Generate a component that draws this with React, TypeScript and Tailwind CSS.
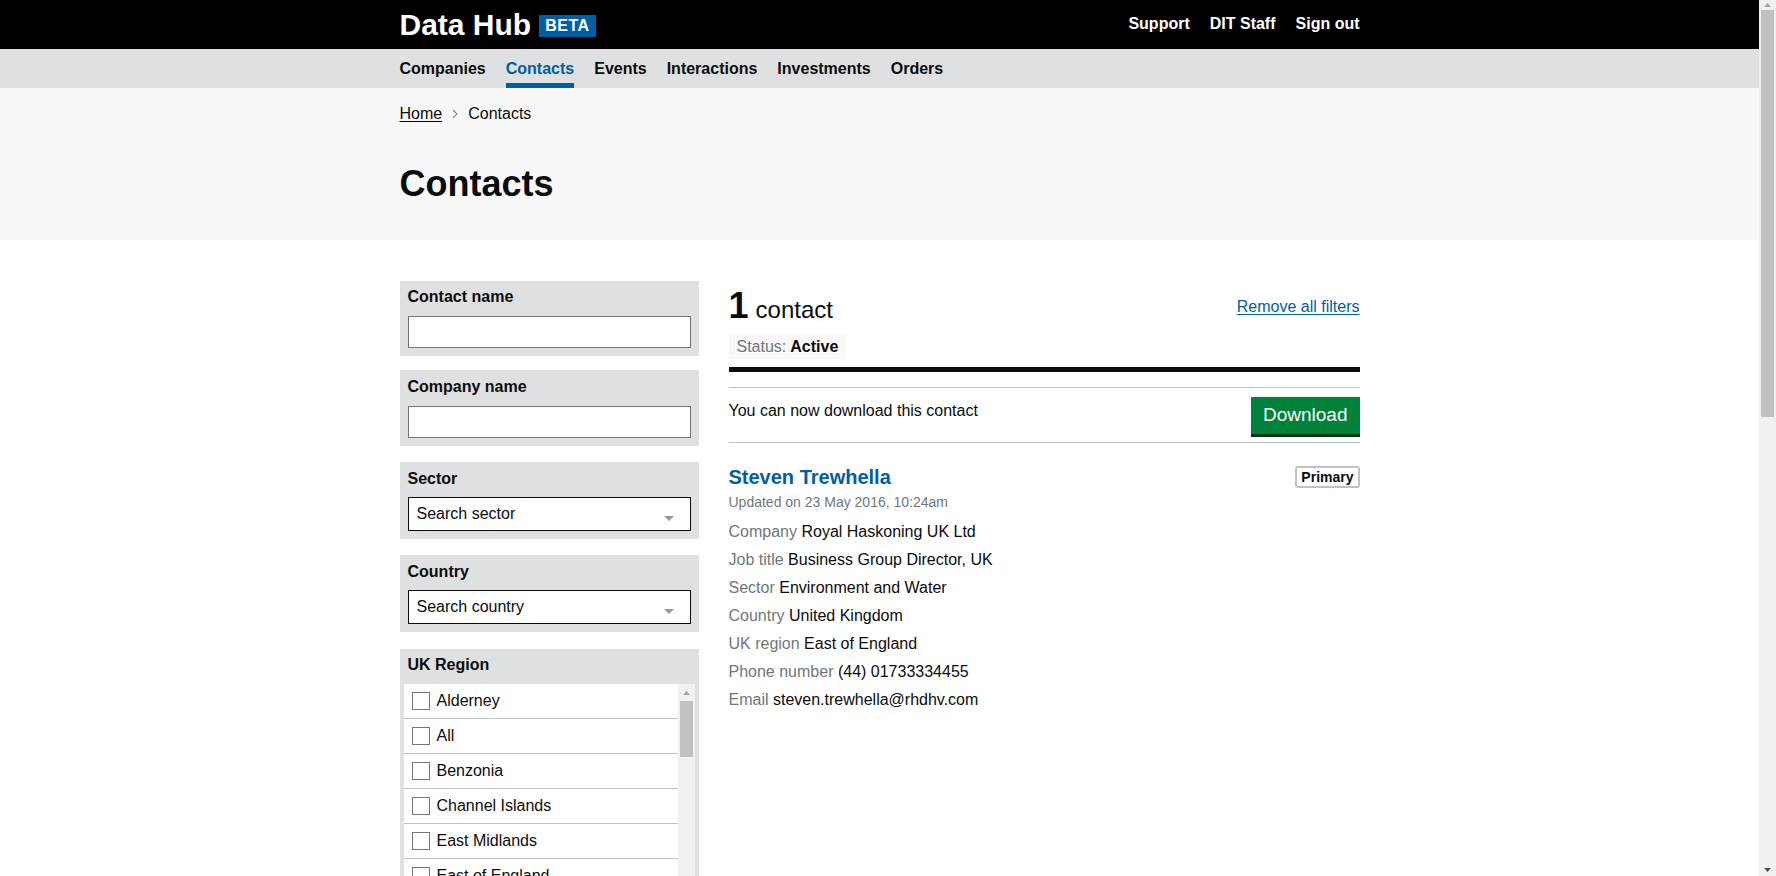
import React from 'react';

const navItems = ['Companies', 'Contacts', 'Events', 'Interactions', 'Investments', 'Orders'];

const regions = [
  'Alderney',
  'All',
  'Benzonia',
  'Channel Islands',
  'East Midlands',
  'East of England',
  'Guernsey',
  'Isle of Man',
];

const details: [string, string][] = [
  ['Company', 'Royal Haskoning UK Ltd'],
  ['Job title', 'Business Group Director, UK'],
  ['Sector', 'Environment and Water'],
  ['Country', 'United Kingdom'],
  ['UK region', 'East of England'],
  ['Phone number', '(44) 01733334455'],
  ['Email', 'steven.trewhella@rhdhv.com'],
];

const Triangle: React.FC<{ up?: boolean; color: string; w?: number; h?: number }> = ({
  up,
  color,
  w = 8,
  h = 4,
}) => (
  <svg width={w} height={h} viewBox={`0 0 ${w} ${h}`}>
    <polygon points={up ? `0,${h} ${w / 2},0 ${w},${h}` : `0,0 ${w},0 ${w / 2},${h}`} fill={color} />
  </svg>
);

const TextFilter: React.FC<{ label: string; className?: string }> = ({ label, className = '' }) => (
  <div className={`bg-[#dee0e2] px-[8px] pt-[6px] pb-[8px] ${className}`}>
    <div className="text-[16px] leading-[20px] font-bold text-[#0b0c0c] mb-[9px]">{label}</div>
    <div className="h-[32px] bg-white border border-[#6f777b]" />
  </div>
);

const SelectFilter: React.FC<{ label: string; placeholder: string; className?: string }> = ({
  label,
  placeholder,
  className = '',
}) => (
  <div className={`bg-[#dee0e2] px-[8px] pt-[7px] pb-[8px] ${className}`}>
    <div className="text-[16px] leading-[20px] font-bold text-[#0b0c0c] mb-[8px]">{label}</div>
    <div className="h-[34px] bg-white border border-[#0b0c0c] flex items-center justify-between pl-[8px] pr-[16px]">
      <span className="text-[16px] text-[#0b0c0c]">{placeholder}</span>
      <span className="mt-[8px] flex">
        <Triangle color="#999999" w={10} h={5} />
      </span>
    </div>
  </div>
);

export default function App() {
  return (
    <div className="flex w-full h-[876px] overflow-hidden bg-white font-['Liberation_Sans',Arial,sans-serif] text-[#0b0c0c]">
      <div className="flex-1 min-w-0 flex flex-col">
        {/* header */}
        <header className="bg-black h-[49px] shrink-0">
          <div className="w-[960px] mx-auto h-full flex items-center justify-between">
            <div className="flex items-center">
              <span className="text-white text-[30px] leading-[34px] font-bold">Data Hub</span>
              <span className="ml-[8px] mt-[3px] bg-[#005ea5] text-white text-[16px] leading-[22px] h-[22px] font-bold px-[6px] tracking-[0.5px]">
                BETA
              </span>
            </div>
            <nav className="flex gap-[20px] text-white text-[16px] font-bold -mt-[2px]">
              <span>Support</span>
              <span>DIT Staff</span>
              <span>Sign out</span>
            </nav>
          </div>
        </header>

        {/* main nav */}
        <div className="bg-[#dee0e2] h-[39px] shrink-0">
          <div className="w-[960px] mx-auto h-full flex gap-[20px]">
            {navItems.map((item) => (
              <span
                key={item}
                className={
                  item === 'Contacts'
                    ? 'h-full flex items-center border-y-[5px] border-t-transparent border-b-[#005ea5] text-[#005ea5] text-[16px] font-bold'
                    : 'h-full flex items-center border-y-[5px] border-transparent text-[#0b0c0c] text-[16px] font-bold'
                }
              >
                {item}
              </span>
            ))}
          </div>
        </div>

        {/* page heading */}
        <div className="bg-[#f8f8f8] h-[152px] shrink-0">
          <div className="w-[960px] mx-auto pt-[16px]">
            <div className="flex items-center text-[16px] leading-[20px]">
              <span className="underline underline-offset-[2px]">Home</span>
              <span className="mx-[10px] flex">
                <svg width="6" height="10" viewBox="0 0 6 10">
                  <path d="M1 1 L5 5 L1 9" fill="none" stroke="#8b8f92" strokeWidth="1.2" />
                </svg>
              </span>
              <span>Contacts</span>
            </div>
            <h1 className="mt-[40px] text-[36px] leading-[40px] font-bold">Contacts</h1>
          </div>
        </div>

        {/* content */}
        <div className="w-[960px] mx-auto flex pt-[41px]">
          <aside className="w-[299px] shrink-0 flex flex-col">
            <TextFilter label="Contact name" />
            <TextFilter label="Company name" className="mt-[14px] !pt-[7px]" />
            <SelectFilter label="Sector" placeholder="Search sector" className="mt-[16px]" />
            <SelectFilter label="Country" placeholder="Search country" className="mt-[16px]" />
            <div className="mt-[17px] bg-[#dee0e2] px-[4px] pt-[6px] pb-[4px]">
              <div className="px-[4px] text-[16px] leading-[20px] font-bold mb-[9px]">UK Region</div>
              <div className="flex h-[300px] overflow-hidden">
                <ul className="flex-1 bg-white">
                  {regions.map((r) => (
                    <li key={r} className="h-[35px] border-b border-[#bfc1c3] flex items-center pl-[8px]">
                      <span className="w-[18px] h-[18px] border border-[#6f777b] bg-white mr-[7px]" />
                      <span className="text-[16px]">{r}</span>
                    </li>
                  ))}
                </ul>
                <div className="w-[17px] bg-[#f1f1f1] flex flex-col items-center">
                  <div className="h-[17px] flex items-center justify-center">
                    <Triangle up color="#a3a3a3" w={7} h={4} />
                  </div>
                  <div className="w-[13px] h-[56px] bg-[#c1c1c1] ml-[1px]" />
                </div>
              </div>
            </div>
          </aside>

          <main className="flex-1 ml-[30px] pt-[7px]">
            <div className="flex justify-between items-start">
              <h2 className="flex items-baseline">
                <span className="text-[36px] leading-[36px] font-bold">1</span>
                <span className="text-[24px] leading-[36px] ml-[7px]">contact</span>
              </h2>
              <a className="mt-[9px] text-[16px] leading-[20px] text-[#005ea5] underline underline-offset-[2px]">
                Remove all filters
              </a>
            </div>
            <div className="mt-[7px] flex w-fit bg-[#f8f8f8] px-[8px] h-[24px] items-center text-[16px]">
              <span className="text-[#6f777b]">Status:</span>
              <span className="ml-[4px] font-bold">Active</span>
            </div>
            <div className="mt-[8px] h-[5px] bg-[#0b0c0c]" />
            <div className="mt-[15px] border-y border-[#bfc1c3] flex justify-between items-start pt-[9px] pb-[8px]">
              <span className="mt-[4px] text-[16px] leading-[20px]">You can now download this contact</span>
              <button className="h-[37px] px-[12px] bg-[#00823b] text-white text-[19px] shadow-[0_3px_0_#003618]">
                Download
              </button>
            </div>

            <div className="pt-[22px]">
              <div className="flex justify-between items-start">
                <span className="text-[20px] leading-[25px] font-bold text-[#005ea5]">Steven Trewhella</span>
                <span className="mt-[1px] border-2 border-[#bfc1c3] rounded-[3px] px-[4px] text-[14px] leading-[18px] font-bold">
                  Primary
                </span>
              </div>
              <div className="mt-[2px] text-[14px] leading-[20px] text-[#6f777b]">Updated on 23 May 2016, 10:24am</div>
              <dl className="mt-[6px]">
                {details.map(([k, v]) => (
                  <div key={k} className="text-[16px] leading-[28px]">
                    <span className="text-[#6f777b]">{k}</span> <span>{v}</span>
                  </div>
                ))}
              </dl>
            </div>
          </main>
        </div>
      </div>

      {/* page scrollbar */}
      <div className="w-[17px] shrink-0 bg-[#f1f1f1] flex flex-col">
        <div className="h-[10px] flex items-center justify-center">
          <Triangle up color="#a3a3a3" w={7} h={4} />
        </div>
        <div className="h-[407px] mx-[2px] bg-[#c1c1c1]" />
        <div className="flex-1" />
        <div className="h-[12px] flex items-center justify-center">
          <Triangle color="#505050" w={7} h={4} />
        </div>
      </div>
    </div>
  );
}
